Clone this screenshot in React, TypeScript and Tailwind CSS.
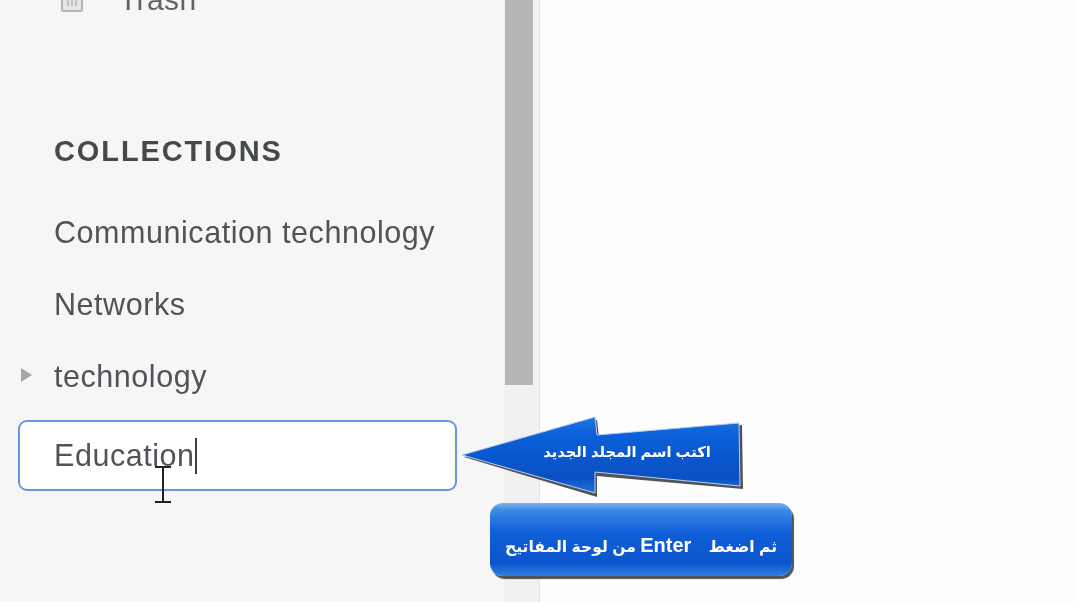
import React from "react";

const rows = ["Communication technology", "Networks", "technology"];

export default function App() {
  return (
    <div className="relative flex h-[602px] w-[1077px] overflow-hidden bg-[#fdfdfd] font-['Liberation_Sans',Arial,sans-serif] blur-[0.4px]">
      <aside className="flex w-[504px] shrink-0 flex-col bg-[#f5f6f5] text-[#505458]">
        <div className="-mt-[18px] flex h-[36px] items-center pl-[60px]">
          <svg width="24" height="28" viewBox="0 0 24 28" fill="none" stroke="#b4b4b4" strokeWidth="2">
            <rect x="2" y="3" width="20" height="22" rx="1.5" fill="#e6e6e6" />
            <path d="M8 7v13M12 7v13M16 7v13" strokeWidth="1.5" />
          </svg>
          <span className="ml-[35px] text-[30px] leading-[36px] tracking-[0.4px] text-[#5f6468]">Trash</span>
        </div>
        <h2 className="mt-[113px] pl-[54px] text-[29px] leading-[40px] font-bold tracking-[1.9px] text-[#46494c]">COLLECTIONS</h2>
        <ul className="mt-[26px] flex flex-col">
          {rows.map((r) => (
            <li key={r} className="relative flex h-[72px] items-center pl-[54px] text-[30.5px] tracking-[0.55px]">
              {r === "technology" && (
                <span className="absolute left-[21px] top-[27px] h-0 w-0 border-y-[7px] border-l-[11px] border-y-transparent border-l-[#a5a7a7]" />
              )}
              {r}
            </li>
          ))}
        </ul>
        <div className="ml-[18px] mt-[7px] flex h-[71px] w-[439px] items-center rounded-[9px] border-2 border-[#6797df] bg-white pl-[34px] text-[30.5px] tracking-[0.55px]">
          <span>Education</span>
          <span className="h-[36px] w-[2px] bg-[#3c4145]" />
        </div>
      </aside>

      <div className="h-full w-[36px] shrink-0 border-r border-[#e4e4e4] bg-[#f1f1f1] pl-px pr-[6px]">
        <div className="h-[385px] bg-[#b6b6b6]" />
      </div>

      <main className="flex-1 bg-[#fdfdfd]" />

      {/* I-beam pointer over the input */}
      <svg className="absolute left-[153px] top-[465px]" width="20" height="40" viewBox="0 0 20 40" fill="none" stroke="#222" strokeWidth="2">
        <path d="M2 2h16M10 2v35M2 37h16" />
      </svg>

      {/* Arrow callout */}
      <div className="absolute left-[458px] top-[412px] h-[90px] w-[292px]">
        <svg className="absolute inset-0" width="292" height="90" viewBox="0 0 292 90">
          <defs>
            <linearGradient id="arrowFill" x1="0" y1="0" x2="0" y2="1">
              <stop offset="0" stopColor="#1f74e0" />
              <stop offset="0.25" stopColor="#0b5fd8" />
              <stop offset="0.8" stopColor="#0a50c4" />
              <stop offset="1" stopColor="#2272da" />
            </linearGradient>
          </defs>
          <path d="M6 45L139 8L141 25L284 13L285 77L139 64L139 85Z" fill="#4f5356" />
          <path d="M4 43L137 5L139 23L281 11L282 74L137 60L137 81Z" fill="url(#arrowFill)" stroke="#b5cdef" strokeWidth="1" />
        </svg>
        <span dir="rtl" className="absolute left-[85px] top-[30px] w-[168px] text-center font-['Liberation_Sans','DejaVu_Sans',sans-serif] text-[14.7px] leading-[20px] font-bold whitespace-nowrap text-white">
          اكتب اسم المجلد الجديد
        </span>
      </div>

      {/* Rounded callout */}
      <div
        dir="rtl"
        className="absolute left-[490px] top-[503px] flex h-[73px] w-[302px] items-end justify-center rounded-[13px] bg-[linear-gradient(to_bottom,#7fb2ee_0%,#3d88e6_10%,#0f5fd8_40%,#0b55cc_82%,#2f7fe2_100%)] pb-[19px] font-['Liberation_Sans','DejaVu_Sans',sans-serif] text-[15.6px] leading-[20px] font-bold whitespace-nowrap text-white shadow-[2px_3px_1px_#4f5356]"
      >
        <span>
          ثم اضغط&nbsp;&nbsp;&nbsp; <span className="text-[20px]">Enter</span> من لوحة المفاتيح
        </span>
      </div>
    </div>
  );
}
